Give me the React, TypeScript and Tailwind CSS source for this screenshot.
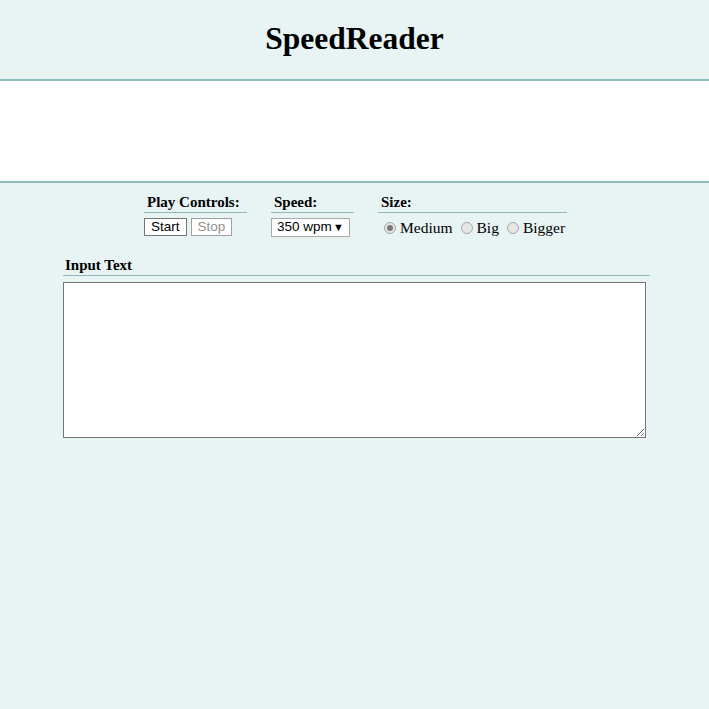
import { useState } from 'react';

const serif = "font-['Liberation_Serif','Times_New_Roman',serif]";
const sans = "font-['Liberation_Sans',Arial,sans-serif]";

export default function App() {
    const [size, setSize] = useState('medium');
    const [text, setText] = useState('');

    return (
        <div className={`min-h-[709px] bg-[#e8f4f4] text-black ${serif}`}>
            <header className="h-[81px] flex items-center justify-center border-b-2 border-[#8cbcbc]">
                <h1 className="text-[31.5px] font-bold leading-none pb-[2px]">SpeedReader</h1>
            </header>

            <div className="h-[102px] bg-white border-b-2 border-[#8cbcbc]" />

            <div className="flex justify-center gap-[24px] pt-[11px] pl-[2px]">
                <div className="w-[103px]">
                    <div className="border-b border-[#8cbcbc] text-[15px] font-bold leading-[17px] pl-[3px] pb-[1px]">Play Controls:</div>
                    <div className="flex gap-[4px] pt-[5px]">
                        <button className={`${sans} text-[13.5px] leading-none h-[18px] px-[6px] border border-[#767676] bg-white`}>Start</button>
                        <button disabled className={`${sans} text-[13.5px] leading-none h-[18px] px-[6px] border border-[#a0a0a0] bg-white text-[#8f8f8f]`}>Stop</button>
                    </div>
                </div>

                <div className="w-[83px]">
                    <div className="border-b border-[#8cbcbc] text-[15px] font-bold leading-[17px] pl-[3px] pb-[1px]">Speed:</div>
                    <div className="pt-[5px]">
                        <div className={`${sans} w-[79px] h-[19px] flex items-center justify-between border border-[#a9a9a9] bg-white text-[13.5px] pl-[5px] pr-[5px]`}>
                            <span>350 wpm</span>
                            <span className="text-[11px]">▼</span>
                        </div>
                    </div>
                </div>

                <div className="w-[189px]">
                    <div className="border-b border-[#8cbcbc] text-[15px] font-bold leading-[17px] pl-[3px] pb-[1px]">Size:</div>
                    <div className="flex items-center pt-[3px] pl-[6px] text-[15.5px]">
                        {[
                            ['medium', 'Medium'],
                            ['big', 'Big'],
                            ['bigger', 'Bigger'],
                        ].map(([key, label]) => (
                            <label key={key} className="flex items-center mr-[8px]">
                                <span className="w-[12px] h-[12px] rounded-full border border-[#a6a6a6] bg-[#e6e6e6] flex items-center justify-center mr-[4px]">
                                    {size === key && <span className="w-[6px] h-[6px] rounded-full bg-[#7a7a7a]" />}
                                </span>
                                <input type="radio" className="hidden" checked={size === key} onChange={() => setSize(key)} />
                                <span onClick={() => setSize(key)}>{label}</span>
                            </label>
                        ))}
                    </div>
                </div>
            </div>

            <div className="ml-[63px] w-[587px] mt-[18px]">
                <div className="border-b border-[#8cbcbc] text-[15px] font-bold leading-[17px] pl-[2px] pb-[1px]">Input Text</div>
                <textarea
                    value={text}
                    onChange={e => setText(e.target.value)}
                    className="block mt-[6px] w-[583px] h-[156px] bg-white border border-[#767676] resize"
                />
            </div>
        </div>
    );
}
